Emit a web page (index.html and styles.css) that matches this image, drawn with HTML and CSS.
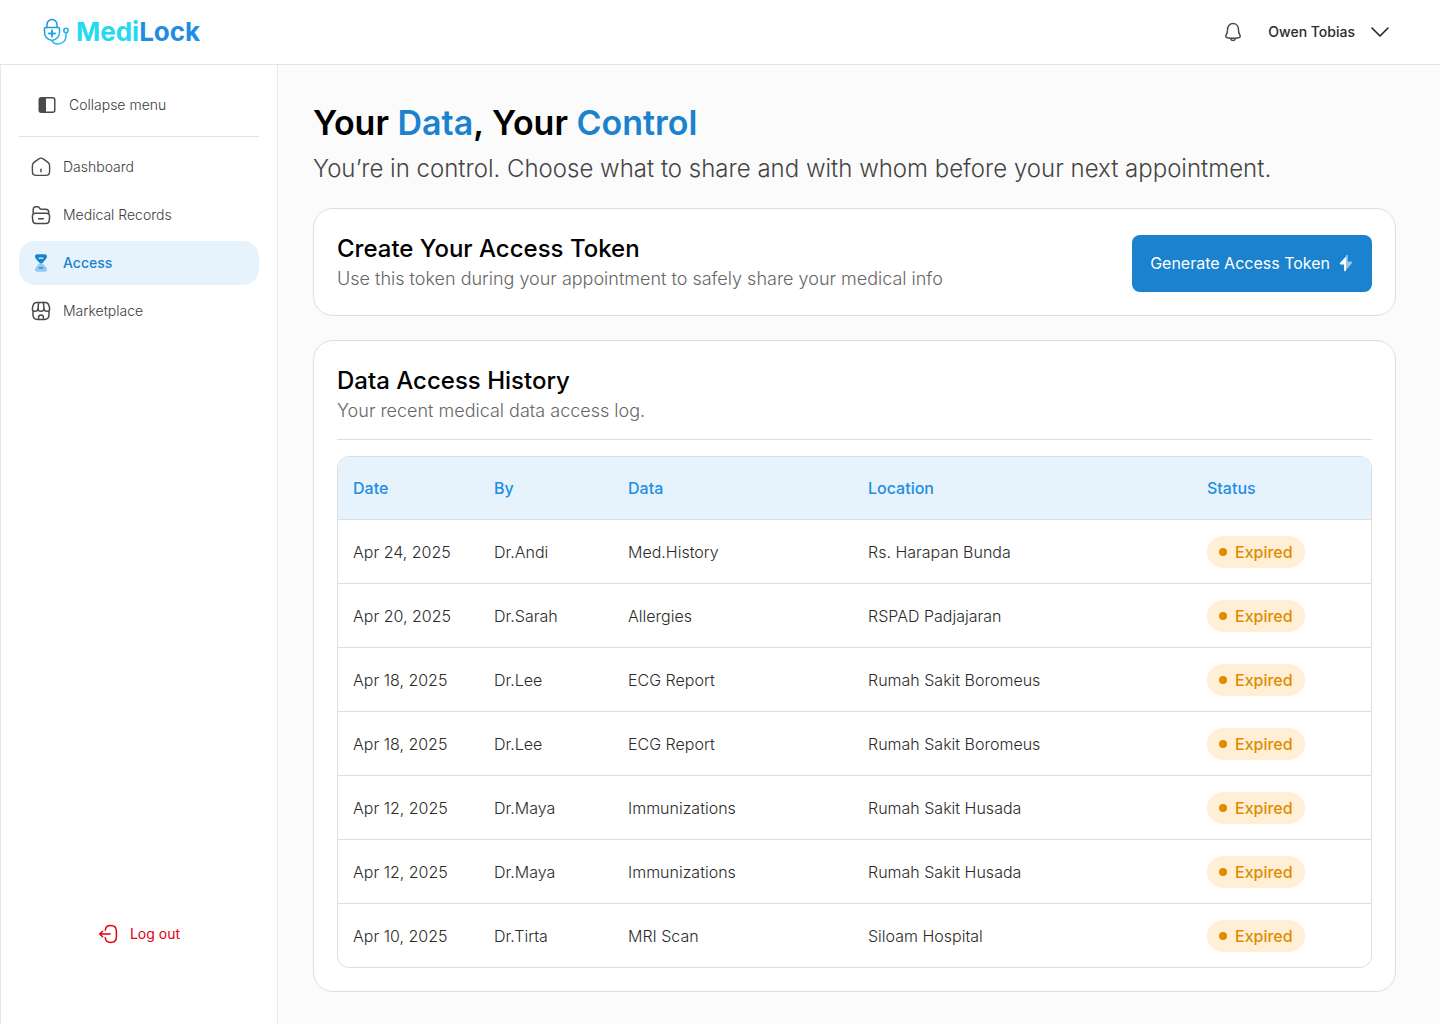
FILE: index.html
```html
<!DOCTYPE html>
<html lang="en">
<head>
<meta charset="utf-8">
<meta name="viewport" content="width=device-width, initial-scale=1">
<title>MediLock – Access</title>
<link rel="stylesheet" href="styles.css">
</head>
<body>
<header class="topbar">
  <a class="brand" href="#" aria-label="MediLock home">
    <svg class="brand-mark" width="26" height="28" viewBox="0 0 26 28" fill="none" stroke="url(#mark)" stroke-width="1.5" stroke-linecap="round">
      <defs><linearGradient id="mark" gradientUnits="userSpaceOnUse" x1="4" y1="0" x2="22" y2="28"><stop stop-color="#1c86dc"/><stop offset="1" stop-color="#25c8f0"/></linearGradient></defs>
      <path d="M4 9.500V6.500a5 5 0 0 1 10 0V9.500"/>
      <path d="M2.500 9.500H15.500a1 1 0 0 1 1 1V14c0 4.500-3 7.500-7.500 8.500C4.500 21.500 1.500 18.500 1.500 14v-3.500a1 1 0 0 1 1-1Z"/>
      <path d="M9 12.500v6M6 15.500h6" stroke-width="2"/>
      <path d="M9 22.500c1 2.500 3 3.500 5.500 3.500 5 0 8.500-3.500 8.500-7.500V15"/>
      <circle cx="23" cy="12.500" r="2.200"/>
    </svg>
    <span class="brand-name">Medi<span class="brand-accent">Lock</span></span>
  </a>
  <div class="account">
    <button class="icon-button" type="button" aria-label="Notifications">
      <svg width="20" height="20" viewBox="0 0 20 20" fill="none" stroke="#4b4b4b" stroke-width="1.500" stroke-linecap="round" stroke-linejoin="round"><path d="M10 1.500c-3.300 0-5.400 2.500-5.400 5.600 0 3.400-.5 4.400-1.500 6-.8 1.400-.1 2.400 1.300 2.600 3.700.7 7.500.7 11.200 0 1.400-.2 2.100-1.200 1.300-2.600-1-1.600-1.500-2.600-1.500-6C15.400 4 13.300 1.500 10 1.500Z"/><path d="M7.500 16.500c.5 1.400 1.300 2 2.500 2s2-.6 2.500-2"/></svg>
    </button>
    <button class="user-button" type="button">Owen Tobias
      <svg width="20" height="12" viewBox="0 0 20 12" fill="none" stroke="#222" stroke-width="1.600" stroke-linecap="round" stroke-linejoin="round"><path d="M2 2l8 8 8-8"/></svg>
    </button>
  </div>
</header>
<div class="shell">
  <aside class="sidebar">
    <button class="collapse" type="button">
      <svg width="20" height="20" viewBox="0 0 20 20"><rect x="2.250" y="2.750" width="15.500" height="14.500" rx="2" fill="none" stroke="#4a4a4a" stroke-width="1.500"/><path d="M3 3h6v14H3z" fill="#4a4a4a"/></svg>
      Collapse menu
    </button>
    <nav class="menu">
      <a class="menu-item" href="#">
        <svg width="20" height="20" viewBox="0 0 20 20" fill="none" stroke="#4a4a4a" stroke-width="1.400" stroke-linecap="round" stroke-linejoin="round"><path d="M7.800 1.900 3 5.400C2 6.200 1.400 7.300 1.400 8.600V14.500c0 2.200 1.600 3.900 3.700 3.900h9.800c2.100 0 3.700-1.700 3.700-3.900V8.600c0-1.300-.6-2.400-1.600-3.200l-4.800-3.500c-1.300-.9-3.100-.9-4.400 0Z"/><path d="M10 12.200v2.600"/></svg>
        Dashboard
      </a>
      <a class="menu-item" href="#">
        <svg width="20" height="20" viewBox="0 0 20 20" fill="none" stroke="#4a4a4a" stroke-width="1.500" stroke-linecap="round" stroke-linejoin="round"><path d="M2.200 8.200V4.600c0-1.700 1-2.900 2.700-2.900h1.600c.8 0 1.300.3 1.800 1l.8 1c.3.400.6.500 1.100.500h4.500c1.800 0 3 1 3 2.800v1.200"/><path d="M4.600 8.300h10.800c2.300 0 3.400 1.200 3.200 3.300l-.3 3.600c-.2 2.200-.9 3.300-3.300 3.300H5c-2.400 0-3.100-1.100-3.300-3.300l-.3-3.600c-.2-2.100.9-3.300 3.200-3.300Z"/><path d="M7.600 13.700h4.800"/></svg>
        Medical Records
      </a>
      <a class="menu-item menu-item-active" href="#" aria-current="page">
        <svg width="20" height="20" viewBox="0 0 20 20"><path d="M13.300 18.800H6.700c-2.400 0-3.200-1.600-2.500-3.300.7-1.800 2.600-3.500 4.200-5h3.200c1.600 1.500 3.500 3.200 4.200 5 .7 1.700-.1 3.300-2.500 3.300Z" fill="#94caf1"/><path d="M13.300 1.200H6.700c-2.400 0-3.200 1.600-2.500 3.300.7 1.700 2.500 3.400 3.900 5 .6.700 1.200 1 1.900 1s1.300-.3 1.900-1c1.400-1.600 3.200-3.300 3.900-5 .7-1.700-.1-3.300-2.500-3.300Z" fill="#1a82ce"/><path d="M8.200 5.200h3.600" stroke="#e6f3fc" stroke-width="1.300" stroke-linecap="round"/><path d="M8.200 14.800h3.600" stroke="#1a82ce" stroke-width="1.300" stroke-linecap="round"/></svg>
        Access
      </a>
      <a class="menu-item" href="#">
        <svg width="20" height="20" viewBox="0 0 20 20" fill="none" stroke="#4a4a4a" stroke-width="1.500" stroke-linecap="round" stroke-linejoin="round"><path d="M2 9.800v4c0 3.400 1.300 4.700 4.700 4.700h6.600c3.400 0 4.700-1.300 4.700-4.700v-4"/><path d="M6 1.500h8c2.200 0 3.300.8 3.800 2.600l.8 3.100c.4 1.800-.8 3.100-2.600 3.100-1.700 0-2.900-1-3-2.600-.1 1.600-1.400 2.600-3 2.600s-2.900-1-3-2.600c-.1 1.600-1.300 2.600-3 2.600-1.800 0-3-1.300-2.600-3.100l.8-3.100C2.700 2.300 3.800 1.500 6 1.500Z"/><path d="m7.600 1.600-.6 6M12.400 1.600l.6 6M7.600 18.300v-2c0-1.500.9-2.400 2.400-2.400s2.400.9 2.400 2.400v2"/></svg>
        Marketplace
      </a>
    </nav>
    <button class="logout" type="button">
      <svg width="20" height="20" viewBox="0 0 20 20" fill="none" stroke="#e00010" stroke-width="1.500" stroke-linecap="round" stroke-linejoin="round"><path d="M7.300 6.300c.3-3.400 1.700-4.800 5.200-4.800 4.200 0 5.900 1.700 5.900 5.700v5.600c0 4-1.700 5.700-5.900 5.700-3.500 0-4.900-1.400-5.200-4.700"/><path d="M12.200 10H1.800M4.600 7.200 1.700 10l2.900 2.800"/></svg>
      Log out
    </button>
  </aside>
  <main class="content">
    <h1 class="title">Your <span class="blue">Data</span>, Your <span class="blue">Control</span></h1>
    <p class="subtitle">You’re in control. Choose what to share and with whom before your next appointment.</p>
    <section class="card token-card">
      <div>
        <h2 class="card-title">Create Your Access Token</h2>
        <p class="card-text">Use this token during your appointment to safely share your medical info</p>
      </div>
      <button class="generate" type="button">Generate Access Token
        <svg width="16" height="18" viewBox="0 0 16 18"><path d="M8 3V1.800C8 .8 9.400.3 9.800 1.600v5.800h3.100c1.400 0 1.700 1 .8 2L8 16Z" fill="#94c6ea"/><path d="M8 2.500v13.700c0 1.300-1.900 1.500-1.900-.2v-5.400H3.100c-1.300 0-1.700-1-.8-2Z" fill="#fff"/></svg>
      </button>
    </section>
    <section class="card history-card">
      <div class="history-head">
        <h2 class="card-title">Data Access History</h2>
        <p class="card-text">Your recent medical data access log.</p>
      </div>
      <table class="history">
        <colgroup><col class="col-date"><col class="col-by"><col class="col-data"><col class="col-location"><col></colgroup>
        <thead><tr><th>Date</th><th>By</th><th>Data</th><th>Location</th><th>Status</th></tr></thead>
        <tbody>
          <tr><td>Apr 24, 2025</td><td>Dr.Andi</td><td>Med.History</td><td>Rs. Harapan Bunda</td><td><span class="status">Expired</span></td></tr>
          <tr><td>Apr 20, 2025</td><td>Dr.Sarah</td><td>Allergies</td><td>RSPAD Padjajaran</td><td><span class="status">Expired</span></td></tr>
          <tr><td>Apr 18, 2025</td><td>Dr.Lee</td><td>ECG Report</td><td>Rumah Sakit Boromeus</td><td><span class="status">Expired</span></td></tr>
          <tr><td>Apr 18, 2025</td><td>Dr.Lee</td><td>ECG Report</td><td>Rumah Sakit Boromeus</td><td><span class="status">Expired</span></td></tr>
          <tr><td>Apr 12, 2025</td><td>Dr.Maya</td><td>Immunizations</td><td>Rumah Sakit Husada</td><td><span class="status">Expired</span></td></tr>
          <tr><td>Apr 12, 2025</td><td>Dr.Maya</td><td>Immunizations</td><td>Rumah Sakit Husada</td><td><span class="status">Expired</span></td></tr>
          <tr><td>Apr 10, 2025</td><td>Dr.Tirta</td><td>MRI Scan</td><td>Siloam Hospital</td><td><span class="status">Expired</span></td></tr>
        </tbody>
      </table>
    </section>
  </main>
</div>
</body>
</html>
```
FILE: styles.css
```css
*, *::before, *::after { box-sizing: border-box; }
body {
  margin: 0;
  min-height: 100vh;
  display: flex;
  flex-direction: column;
  font-family: Inter, "Open Sans", sans-serif;
  font-size: 16px;
  line-height: 24px;
  color: #2b2b2b;
  background: #fbfbfb;
}
h1, h2, p { margin: 0; }
a { color: inherit; text-decoration: none; }
button { font: inherit; color: inherit; background: none; border: 0; padding: 0; cursor: pointer; }
svg { display: block; flex: none; }

.topbar {
  display: flex;
  align-items: center;
  justify-content: space-between;
  height: 65px;
  padding: 0 50px 0 43px;
  background: #fff;
  border-bottom: 1px solid #e4e4e8;
}
.brand { display: flex; align-items: center; gap: 7px; }
.brand-name { font-size: 26px; line-height: 32px; font-weight: 700; color: #27d8f2; }
.brand-accent { color: #1f8de4; }
.account { display: flex; align-items: center; gap: 25px; }
.user-button { display: flex; align-items: center; gap: 15px; font-size: 14px; font-weight: 500; }

.shell { flex: 1; display: flex; }
.sidebar {
  flex: none;
  width: 278px;
  display: flex;
  flex-direction: column;
  padding: 16px 18px 68px;
  background: #fff;
  border: solid #e8e8ec;
  border-width: 0 1px;
  font-size: 14px;
  font-weight: 300;
  color: #3c3c3c;
}
.collapse {
  display: flex;
  align-items: center;
  gap: 12px;
  padding: 12px 18px 19px;
  border-bottom: 1px solid #e2e2e6;
}
.menu { display: flex; flex-direction: column; gap: 4px; padding-top: 8px; }
.menu-item { display: flex; align-items: center; gap: 12px; height: 44px; padding: 0 12px; border-radius: 16px; }
.menu-item-active { background: #e6f3fc; color: #1a82ce; font-weight: 500; }
.logout {
  display: flex;
  align-items: center;
  gap: 12px;
  align-self: center;
  margin-top: auto;
  padding: 10px 0;
  font-weight: 400;
  color: #e00010;
}

.content { flex: 1; min-width: 0; padding: 32px 44px 32px 35px; }
.title { font-size: 34px; line-height: 52px; font-weight: 600; color: #000; }
.blue { color: #1a82ce; }
.subtitle { padding-top: 4px; font-size: 24px; line-height: 32px; font-weight: 300; color: #444; }
.card { margin-top: 24px; padding: 24px 23px 23px; background: #fff; border: 1px solid #dedede; border-radius: 20px; }
.token-card {
  display: flex;
  align-items: center;
  justify-content: space-between;
  gap: 24px;
  margin-top: 23px;
  padding-bottom: 22px;
}
.card-title { font-size: 24px; line-height: 32px; font-weight: 500; color: #000; }
.card-text { font-size: 18px; line-height: 28px; font-weight: 300; color: #666; }
.generate {
  flex: none;
  display: flex;
  align-items: center;
  gap: 8px;
  height: 57px;
  padding: 0 18px;
  border-radius: 8px;
  background: #1a82ce;
  color: #fff;
}
.history-head { padding-bottom: 14px; border-bottom: 1px solid #dedede; }
.history {
  width: 100%;
  margin-top: 16px;
  table-layout: fixed;
  border: 1px solid #dedede;
  border-radius: 12px;
  border-spacing: 0;
  overflow: hidden;
}
.col-date { width: 141px; }
.col-by { width: 134px; }
.col-data { width: 240px; }
.col-location { width: 339px; }
.history th { height: 62px; padding: 0 15px; text-align: left; font-weight: 500; color: #1f8de4; background: #e6f3fc; }
.history td { height: 64px; padding: 0 15px; border-top: 1px solid #dedede; font-weight: 350; }
.status {
  display: inline-flex;
  align-items: center;
  gap: 8px;
  height: 32px;
  padding: 0 12px;
  border-radius: 16px;
  background: #ffefd6;
  color: #e08c00;
  font-weight: 500;
  vertical-align: middle;
}
.status::before { content: ""; width: 8px; height: 8px; border-radius: 50%; background: #e08c00; }
```
